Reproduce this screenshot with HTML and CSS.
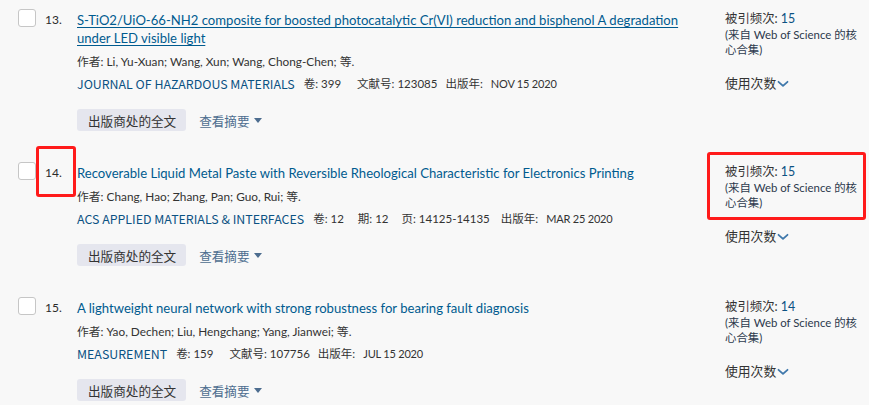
FILE: index.html
```html
<!DOCTYPE html>
<html lang="zh-CN">
<head>
<meta charset="utf-8">
<title>Records</title>
<link rel="stylesheet" href="styles.css">
</head>
<body>
<div class="list">
  <div class="record">
    <div class="check"><span class="box"></span></div>
    <div class="num">13.</div>
    <div class="main">
      <a class="title underlined" href="#">S-TiO2/UiO-66-NH2 composite for boosted photocatalytic Cr(VI) reduction and bisphenol A degradation under LED visible light</a>
      <div class="authors">作者: Li, Yu-Xuan; Wang, Xun; Wang, Chong-Chen; 等.</div>
      <div class="source"><span class="journal">JOURNAL OF HAZARDOUS MATERIALS</span><span class="meta vol">卷: 399</span><span class="meta art">文献号: 123085</span><span class="meta label">出版年:</span><span class="meta date">NOV 15 2020</span></div>
      <div class="actions"><span class="btn">出版商处的全文</span><span class="abstract">查看摘要<span class="caret"></span></span></div>
    </div>
    <div class="side">
      <div class="cites">被引频次: <span class="count">15</span></div>
      <div class="note">(来自 Web of Science 的核心合集)</div>
      <div class="usage">使用次数<svg class="chev" width="12" height="8" viewBox="0 0 12 8"><path d="M1.5 1.8 L6 5.8 L10.5 1.8" fill="none" stroke="#3f78ab" stroke-width="1.8" stroke-linecap="round" stroke-linejoin="round"/></svg></div>
    </div>
  </div>

  <div class="record">
    <div class="check"><span class="box"></span></div>
    <div class="num">14.</div>
    <div class="main">
      <a class="title" href="#">Recoverable Liquid Metal Paste with Reversible Rheological Characteristic for Electronics Printing</a>
      <div class="authors">作者: Chang, Hao; Zhang, Pan; Guo, Rui; 等.</div>
      <div class="source"><span class="journal">ACS APPLIED MATERIALS &amp; INTERFACES</span><span class="meta vol2">卷: 12</span><span class="meta iss">期: 12</span><span class="meta pages">页: 14125-14135</span><span class="meta label">出版年:</span><span class="meta date">MAR 25 2020</span></div>
      <div class="actions"><span class="btn">出版商处的全文</span><span class="abstract">查看摘要<span class="caret"></span></span></div>
    </div>
    <div class="side">
      <div class="cites">被引频次: <span class="count">15</span></div>
      <div class="note">(来自 Web of Science 的核心合集)</div>
      <div class="usage">使用次数<svg class="chev" width="12" height="8" viewBox="0 0 12 8"><path d="M1.5 1.8 L6 5.8 L10.5 1.8" fill="none" stroke="#3f78ab" stroke-width="1.8" stroke-linecap="round" stroke-linejoin="round"/></svg></div>
    </div>
    <span class="mark mark-num"></span>
    <span class="mark mark-cite"></span>
  </div>

  <div class="record">
    <div class="check"><span class="box"></span></div>
    <div class="num">15.</div>
    <div class="main">
      <a class="title" href="#">A lightweight neural network with strong robustness for bearing fault diagnosis</a>
      <div class="authors">作者: Yao, Dechen; Liu, Hengchang; Yang, Jianwei; 等.</div>
      <div class="source"><span class="journal">MEASUREMENT</span><span class="meta vol">卷: 159</span><span class="meta art">文献号: 107756</span><span class="meta label">出版年:</span><span class="meta date">JUL 15 2020</span></div>
      <div class="actions"><span class="btn">出版商处的全文</span><span class="abstract">查看摘要<span class="caret"></span></span></div>
    </div>
    <div class="side">
      <div class="cites">被引频次: <span class="count">14</span></div>
      <div class="note">(来自 Web of Science 的核心合集)</div>
      <div class="usage">使用次数<svg class="chev" width="12" height="8" viewBox="0 0 12 8"><path d="M1.5 1.8 L6 5.8 L10.5 1.8" fill="none" stroke="#3f78ab" stroke-width="1.8" stroke-linecap="round" stroke-linejoin="round"/></svg></div>
    </div>
  </div>
</div>
</body>
</html>
```

FILE: styles.css
```css
html, body {
  margin: 0;
  padding: 0;
  background: #f8f8f8;
}

body {
  font-family: Lato, "Noto Sans CJK SC", sans-serif;
  color: #333;
  width: 869px;
  height: 405px;
  overflow: hidden;
}

.record {
  position: relative;
  display: grid;
  grid-template-columns: 27px 32px 1fr 139px;
  padding: 11px 5px 22px 18px;
}

.box {
  display: block;
  width: 16px;
  height: 16px;
  margin-top: -2px;
  background: #fff;
  border: 1px solid #c6c6c6;
  border-radius: 3px;
}

.num {
  font-size: 12px;
  line-height: 18px;
  height: 18px;
  color: #2b2b2b;
}

.main {
  padding-right: 25px;
  min-width: 0;
}

.title {
  display: block;
  font-size: 13.1px;
  line-height: 18px;
  color: #005b8f;
  text-decoration: none;
  margin-bottom: 4px;
}

.title.underlined {
  text-decoration: underline;
  text-underline-offset: 2px;
}

.authors {
  font-size: 11.8px;
  line-height: 22px;
  height: 22px;
  color: #333;
}

.source {
  display: flex;
  align-items: center;
  height: 22px;
  font-size: 11.5px;
  line-height: 22px;
  color: #333;
  white-space: nowrap;
}

.journal {
  font-family: "Noto Sans CJK SC", sans-serif;
  font-size: 12.4px;
  color: #0b5283;
  margin-right: 9px;
}

.meta {
  margin-right: 12px;
}

.meta.vol {
  margin-right: 16px;
}

.meta.vol2 {
  margin-right: 14px;
}

.meta.iss {
  margin-right: 13px;
}

.meta.art {
  margin-right: 8px;
}

.meta.pages {
  margin-right: 11px;
}

.meta.label {
  margin-right: 8px;
}

.meta.date {
  font-size: 11px;
  letter-spacing: -0.2px;
}

.actions {
  display: flex;
  align-items: center;
  margin-top: 14px;
  height: 22px;
}

.btn {
  display: inline-flex;
  align-items: center;
  height: 22px;
  padding: 0 10px 0 11px;
  background: #e5e6ee;
  border-radius: 3px;
  font-size: 12.6px;
  color: #333;
}

.abstract {
  display: inline-flex;
  align-items: center;
  margin-left: 13px;
  font-size: 12.6px;
  color: #4d6d8f;
}

.caret {
  display: inline-block;
  width: 0;
  height: 0;
  margin-left: 4px;
  border-left: 4px solid transparent;
  border-right: 4px solid transparent;
  border-top: 5px solid #4d6d8f;
}

.side {
  font-size: 12.4px;
  line-height: 15.5px;
  color: #333;
}

.cites {
  height: 15.5px;
}

.count {
  color: #0b5283;
}

.note {
  font-size: 11.4px;
  color: #2d3a4d;
  height: 31px;
}

.usage {
  margin-top: 17px;
  line-height: 16px;
  height: 16px;
  display: flex;
  align-items: center;
  font-size: 12.8px;
}

.chev {
  margin-left: 1px;
  margin-top: 2px;
}

.mark {
  position: absolute;
  border: 3px solid #ff1a1a;
  border-radius: 3px;
  box-sizing: border-box;
}

.mark-num {
  left: 36px;
  top: -7px;
  width: 40px;
  height: 51px;
}

.mark-cite {
  left: 707px;
  top: -1px;
  width: 159px;
  height: 68px;
}
```
